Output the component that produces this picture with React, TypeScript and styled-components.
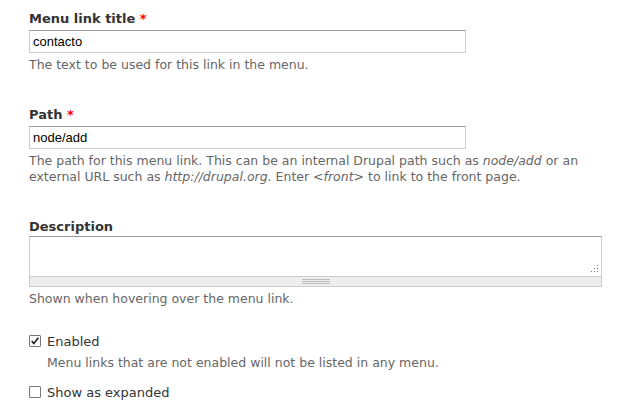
import React from "react";
import styled, { createGlobalStyle } from "styled-components";

const GlobalStyle = createGlobalStyle`
  html, body {
    margin: 0;
    padding: 0;
    background: #fff;
  }
  body {
    font-family: "DejaVu Sans", sans-serif;
    color: #333;
  }
`;

export default function App() {
  return (
    <>
      <GlobalStyle />
      <Form>
        <FormItem>
          <Label>
            Menu link title <Required>*</Required>
          </Label>
          <TextInput defaultValue="contacto" />
          <Help>The text to be used for this link in the menu.</Help>
        </FormItem>

        <FormItem>
          <Label>
            Path <Required>*</Required>
          </Label>
          <TextInput defaultValue="node/add" />
          <Help>
            The path for this menu link. This can be an internal Drupal path
            such as <em>node/add</em> or an external URL such as{" "}
            <em>http://drupal.org</em>. Enter <em>&lt;front&gt;</em> to link to
            the front page.
          </Help>
        </FormItem>

        <FormItem $space={25}>
          <Label $tight>Description</Label>
          <TextAreaWrap>
            <TextArea />
            <ResizeDots viewBox="0 0 10 10" width="10" height="10">
              <rect x="8" y="1" width="1" height="1" />
              <rect x="5" y="4" width="1" height="1" />
              <rect x="8" y="4" width="1" height="1" />
              <rect x="2" y="7" width="1" height="1" />
              <rect x="5" y="7" width="1" height="1" />
              <rect x="8" y="7" width="1" height="1" />
            </ResizeDots>
            <Grippie>
              <GripLines />
            </Grippie>
          </TextAreaWrap>
          <Help>Shown when hovering over the menu link.</Help>
        </FormItem>

        <CheckItem>
          <CheckRow>
            <Box>
              <svg viewBox="0 0 12 12" width="10" height="10">
                <path
                  d="M2 6.2 L4.6 9 L10 2.2"
                  fill="none"
                  stroke="#222"
                  strokeWidth="2"
                />
              </svg>
            </Box>
            <CheckLabel>Enabled</CheckLabel>
          </CheckRow>
          <CheckHelp>
            Menu links that are not enabled will not be listed in any menu.
          </CheckHelp>
        </CheckItem>

        <CheckItem>
          <CheckRow>
            <Box />
            <CheckLabel>Show as expanded</CheckLabel>
          </CheckRow>
        </CheckItem>
      </Form>
    </>
  );
}

const Form = styled.div`
  padding: 10px 0 0 29px;
  width: 573px;
`;

const FormItem = styled.div<{ $space?: number }>`
  margin-bottom: ${(p) => p.$space ?? 33}px;
`;

const Label = styled.div<{ $tight?: boolean }>`
  font-weight: bold;
  font-size: 13px;
  line-height: 18px;
  color: #333;
  margin-bottom: ${(p) => (p.$tight ? 0 : 2)}px;
`;

const Required = styled.span`
  color: #f00;
`;

const TextInput = styled.input`
  display: block;
  box-sizing: border-box;
  width: 437px;
  height: 23px;
  margin: 0;
  padding: 2px 3px;
  border: 1px solid #ccc;
  border-top-color: #999;
  font-family: "Liberation Sans", Arial, sans-serif;
  font-size: 13px;
  color: #000;
  background: #fff;
  outline: none;
`;

const Help = styled.div`
  font-size: 12.5px;
  line-height: 16px;
  color: #666;
  margin-top: 4px;
  width: 580px;

  em {
    font-style: italic;
  }
`;

const TextAreaWrap = styled.div`
  position: relative;
  width: 573px;
`;

const TextArea = styled.textarea`
  display: block;
  box-sizing: border-box;
  width: 573px;
  height: 40px;
  margin: 0;
  border: 1px solid #ccc;
  border-top-color: #999;
  border-bottom: none;
  resize: none;
  outline: none;
  background: #fff;
`;

const ResizeDots = styled.svg`
  position: absolute;
  right: 3px;
  top: 28px;
  fill: #777;
`;

const Grippie = styled.div`
  box-sizing: border-box;
  height: 11px;
  background: #eee;
  border: 1px solid #ccc;
  display: flex;
  justify-content: center;
  align-items: center;
`;

const GripLines = styled.div`
  width: 28px;
  height: 3px;
  border-top: 1px solid #bbb;
  border-bottom: 1px solid #bbb;
  position: relative;
  &::after {
    content: "";
    position: absolute;
    left: 0;
    right: 0;
    top: 1px;
    border-top: 1px solid #bbb;
  }
`;

const CheckItem = styled.div`
  margin-bottom: 12px;
`;

const CheckRow = styled.div`
  display: flex;
  align-items: center;
  gap: 6px;
  height: 18px;
`;

const Box = styled.span`
  box-sizing: border-box;
  width: 12px;
  height: 12px;
  border: 1px solid #777;
  border-radius: 1px;
  background: #fff;
  display: flex;
  align-items: center;
  justify-content: center;
`;

const CheckLabel = styled.span`
  font-size: 13px;
  color: #333;
`;

const CheckHelp = styled.div`
  font-size: 12.5px;
  line-height: 16px;
  color: #666;
  margin: 5px 0 0 18px;
`;
